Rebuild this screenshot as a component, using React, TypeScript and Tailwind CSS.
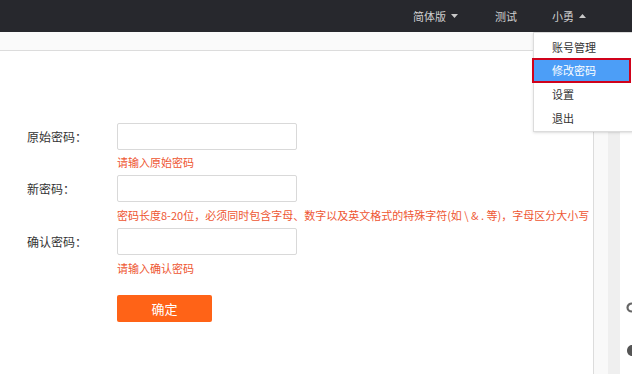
// Change-password page with the user dropdown open.

const FONT = { fontFamily: '"Microsoft YaHei", "Noto Sans CJK SC", "Liberation Sans", sans-serif' };

interface Field {
  label: string;
  hint: string;
  gap: string;
}

const FIELDS: Field[] = [
  { label: "原始密码：", hint: "请输入原始密码", gap: "h-[25px]" },
  {
    label: "新密码：",
    hint: "密码长度8-20位，必须同时包含字母、数字以及英文格式的特殊字符(如 \\ & . 等)，字母区分大小写",
    gap: "h-[26px]",
  },
  { label: "确认密码：", hint: "请输入确认密码", gap: "h-[26px]" },
];

const MENU = ["账号管理", "修改密码", "设置", "退出"];

function Caret({ up }: { up?: boolean }) {
  return (
    <svg width="7" height="4" viewBox="0 0 7 4" className="ml-[5px]" aria-hidden="true">
      <path d={up ? "M0 4L3.5 0L7 4z" : "M0 0L3.5 4L7 0z"} fill="#c9c9c9" />
    </svg>
  );
}

// partially visible glyph edges at the far right of the page
function EdgeMark({ solid }: { solid?: boolean }) {
  return (
    <svg width="6" height="12" viewBox="0 0 6 12" aria-hidden="true">
      {solid ? (
        <path d="M6 1C3 1 1 3.5 1 6.5S3 12 6 12z" fill="#555" />
      ) : (
        <path d="M6 2.5C3.5 2.5 1.5 4.3 1.5 6.5S3.5 10.5 6 10.5" fill="none" stroke="#666" strokeWidth="2.2" />
      )}
    </svg>
  );
}

export default function App() {
  return (
    <div className="relative flex h-[374px] w-[632px] flex-col overflow-hidden bg-white" style={FONT}>
      {/* ── Top bar ── */}
      <header className="flex h-8 shrink-0 items-center bg-[#27282d] pl-[413px] text-[11px] text-[#cfcfcf]">
        <span className="flex items-center">
          简体版
          <Caret />
        </span>
        <span className="ml-[37px]">测试</span>
        <span className="ml-[35px] flex items-center">
          小勇
          <Caret up />
        </span>
      </header>

      {/* ── Sub bar ── */}
      <div className="h-[19px] shrink-0 border-b border-[#dcdcdc] bg-[#fafafa]" />

      {/* ── Body ── */}
      <div className="flex flex-1">
        <main className="flex-1 pl-[27px] pt-[72px]">
          {FIELDS.map((f) => (
            <div key={f.label}>
              <div className="flex h-[27px] items-center">
                <label className="w-[90px] text-[12px] text-[#333]">{f.label}</label>
                <input
                  type="password"
                  className="h-[27px] w-[180px] rounded-[2px] border border-[#d9d9d9] bg-white outline-none"
                />
              </div>
              <div className={`${f.gap} flex items-center whitespace-nowrap pl-[90px] text-[11px] text-[#ee5632]`}>
                {f.hint}
              </div>
            </div>
          ))}
          <button className="ml-[90px] mt-[14px] flex h-[27px] w-[95px] items-center justify-center rounded-[2px] bg-[#ff6317] text-[13px] text-white">
            确定
          </button>
        </main>

        {/* Right side strip */}
        <aside className="flex w-[39px] shrink-0 border-l border-[#dcdcdc]">
          <div className="w-[14px] bg-[#f9f9f9]" />
          <div className="w-[12px] bg-[#efefef]" />
          <div className="flex flex-1 flex-col items-end pt-[250px]">
            <EdgeMark />
            <div className="mt-[31px]">
              <EdgeMark solid />
            </div>
          </div>
        </aside>
      </div>

      {/* ── User dropdown ── */}
      <ul className="absolute left-[533px] top-8 w-[101px] border border-[#dcdcdc] bg-white pb-px pt-[2px] text-[11px] text-[#333] shadow-sm">
        {MENU.map((item) =>
          item === "修改密码" ? (
            <li
              key={item}
              className="-my-px -ml-[2px] flex h-[25px] w-[99px] items-center border-2 border-[#d0021b] bg-[#4c9ef7] pl-[18px] text-white"
            >
              {item}
            </li>
          ) : (
            <li key={item} className="flex h-6 items-center pl-[18px]">
              {item}
            </li>
          )
        )}
      </ul>
    </div>
  );
}
